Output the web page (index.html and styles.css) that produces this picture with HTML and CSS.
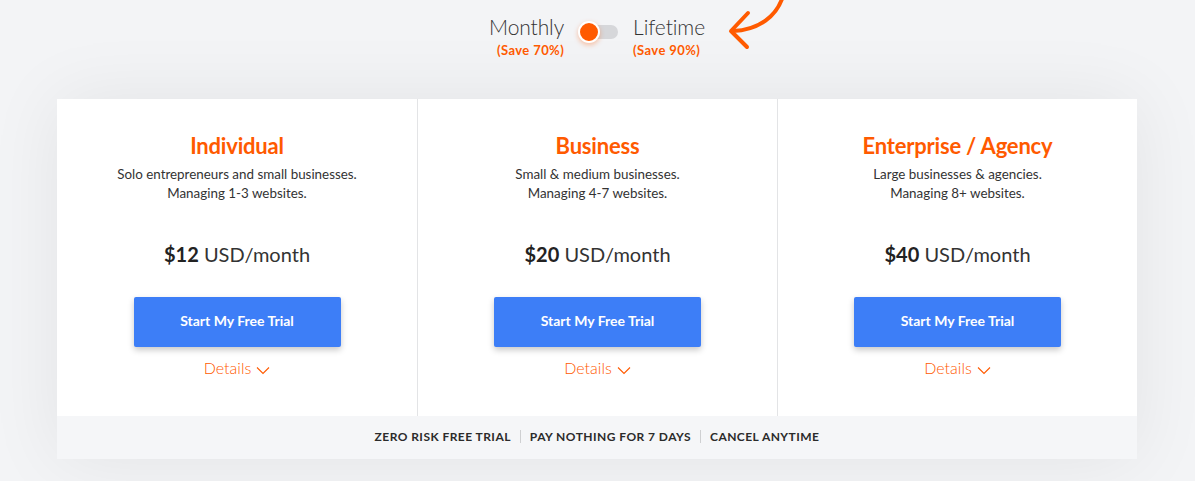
FILE: index.html
```html
<!DOCTYPE html>
<html lang="en">
<head>
<meta charset="utf-8">
<title>Pricing</title>
<link rel="stylesheet" href="styles.css">
</head>
<body>
<div class="page">
  <div class="switcher">
    <div class="opt opt-monthly">
      <div class="opt-label">Monthly</div>
      <div class="opt-save">(Save 70%)</div>
    </div>
    <div class="toggle"><span class="knob"></span></div>
    <div class="opt opt-lifetime">
      <div class="opt-label">Lifetime</div>
      <div class="opt-save">(Save 90%)</div>
    </div>
    <svg class="arrow" width="70" height="56" viewBox="0 0 70 56" aria-hidden="true">
      <path d="M60 -4 C54 16 36 30 10 31" fill="none" stroke="#ff5a00" stroke-width="4" stroke-linecap="round"/>
      <path d="M25 13 L8 31 L24 47" fill="none" stroke="#ff5a00" stroke-width="4" stroke-linecap="round" stroke-linejoin="round"/>
    </svg>
  </div>

  <div class="card">
    <div class="plans">
      <div class="plan">
        <h2 class="plan-title">Individual</h2>
        <p class="plan-desc">Solo entrepreneurs and small businesses.<br>Managing 1-3 websites.</p>
        <div class="price"><b>$12</b> USD/month</div>
        <a class="btn" href="#">Start My Free Trial</a>
        <a class="details" href="#">Details <svg width="14" height="9" viewBox="0 0 14 9"><path d="M1 1.5 L7 7.5 L13 1.5" fill="none" stroke="#ff5a00" stroke-width="1.1"/></svg></a>
      </div>
      <div class="plan">
        <h2 class="plan-title">Business</h2>
        <p class="plan-desc">Small &amp; medium businesses.<br>Managing 4-7 websites.</p>
        <div class="price"><b>$20</b> USD/month</div>
        <a class="btn" href="#">Start My Free Trial</a>
        <a class="details" href="#">Details <svg width="14" height="9" viewBox="0 0 14 9"><path d="M1 1.5 L7 7.5 L13 1.5" fill="none" stroke="#ff5a00" stroke-width="1.1"/></svg></a>
      </div>
      <div class="plan">
        <h2 class="plan-title">Enterprise / Agency</h2>
        <p class="plan-desc">Large businesses &amp; agencies.<br>Managing 8+ websites.</p>
        <div class="price"><b>$40</b> USD/month</div>
        <a class="btn" href="#">Start My Free Trial</a>
        <a class="details" href="#">Details <svg width="14" height="9" viewBox="0 0 14 9"><path d="M1 1.5 L7 7.5 L13 1.5" fill="none" stroke="#ff5a00" stroke-width="1.1"/></svg></a>
      </div>
    </div>
    <div class="guarantee">
      <span>Zero risk free trial</span><i class="sep"></i><span>Pay nothing for 7 days</span><i class="sep"></i><span>Cancel anytime</span>
    </div>
  </div>
</div>
</body>
</html>
```

FILE: styles.css
```css
* { box-sizing: border-box; }
html, body { margin: 0; padding: 0; }
body {
  background: #f3f4f6;
  font-family: "Lato", "Noto Sans", sans-serif;
  color: #333;
  width: 1195px;
  height: 481px;
  overflow: hidden;
}
.page {
  padding: 0 58px 0 57px;
}
.switcher {
  position: relative;
  height: 99px;
  display: flex;
  justify-content: center;
  align-items: flex-start;
  padding-top: 14px;
}
.opt {
  display: flex;
  flex-direction: column;
  align-items: flex-end;
}
.opt-lifetime { align-items: flex-start; }
.opt-label {
  font-size: 21px;
  font-weight: 300;
  color: #333;
  line-height: 26px;
  letter-spacing: -0.1px;
}
.opt-save {
  font-size: 13px;
  font-weight: 700;
  color: #ff5a00;
  line-height: 15px;
  margin-top: 3px;
  letter-spacing: 0.4px;
}
.toggle {
  position: relative;
  width: 36px;
  height: 14px;
  margin: 11px 15px 0 18px;
  background: #d6d7da;
  border-radius: 7px;
}
.knob {
  position: absolute;
  left: -4px;
  top: -4px;
  width: 22px;
  height: 22px;
  border-radius: 50%;
  background: #ff5a00;
  border: 2px solid #fff;
  box-shadow: 0 2px 5px rgba(255, 90, 0, 0.35);
}
.arrow {
  position: absolute;
  left: 666px;
  top: 0;
}
.card {
  background: #fff;
  box-shadow: 0 0 70px rgba(0, 0, 0, 0.07);
}
.plans {
  display: grid;
  grid-template-columns: 1fr 1fr 1fr;
}
.plan {
  display: flex;
  flex-direction: column;
  align-items: center;
  padding-top: 34px;
  height: 317px;
  border-left: 1px solid #e3e4e6;
}
.plan:first-child { border-left: none; }
.plan-title {
  margin: 0;
  font-size: 22px;
  font-weight: 700;
  color: #ff5a00;
  line-height: 26px;
  letter-spacing: -0.2px;
}
.plan-desc {
  margin: 6px 0 0;
  font-size: 13.4px;
  font-weight: 400;
  color: #333;
  line-height: 19px;
  text-align: center;
}
.price {
  margin-top: 38px;
  font-size: 20px;
  line-height: 26px;
  font-weight: 400;
  color: #333;
}
.price b { font-weight: 700; color: #222; }
.btn {
  display: flex;
  align-items: center;
  justify-content: center;
  margin-top: 30px;
  width: 207px;
  height: 50px;
  padding-bottom: 4px;
  background: #3d7ef7;
  color: #fff;
  font-size: 14px;
  font-weight: 700;
  text-decoration: none;
  border-radius: 2px;
  box-shadow: 0 3px 6px rgba(0, 0, 0, 0.22);
}
.details {
  margin-top: 12px;
  display: flex;
  align-items: center;
  gap: 5px;
  font-size: 16px;
  font-weight: 300;
  color: #ff5a00;
  text-decoration: none;
  line-height: 18px;
}
.details svg { margin-top: 4px; }
.guarantee {
  height: 43px;
  background: #f5f6f8;
  display: flex;
  align-items: center;
  justify-content: center;
  font-size: 12px;
  font-weight: 700;
  text-transform: uppercase;
  letter-spacing: 0.45px;
  color: #2b2b2b;
  padding-bottom: 2px;
}
.sep {
  display: inline-block;
  width: 1px;
  height: 13px;
  background: #cfd0d2;
  margin: 0 9px;
}
```
